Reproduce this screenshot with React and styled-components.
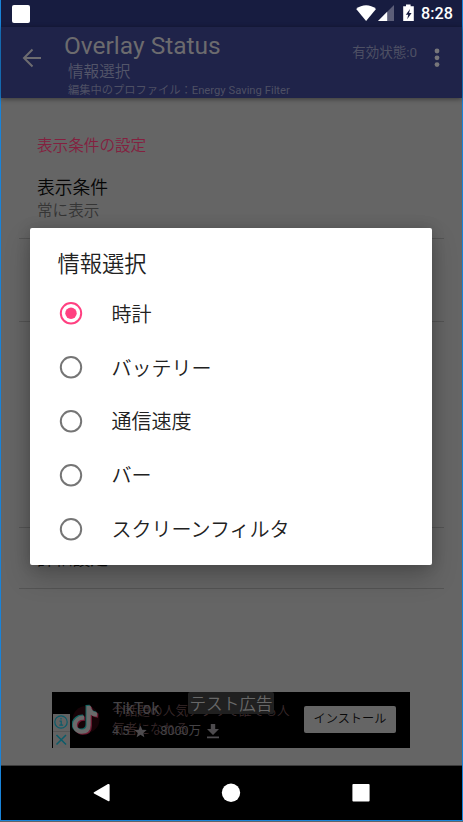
import React, { useState } from 'react'
import styled, { createGlobalStyle } from 'styled-components';

const options = ['時計', 'バッテリー', '通信速度', 'バー', 'スクリーンフィルタ'];

function App() {

  const [selected, setSelected] = useState('時計');

  return (
    <Screen>
      <GlobalStyle />
      <StatusBar>
        <AppSquare />
        <StatusIcons />
        <Clock>8:28</Clock>
      </StatusBar>

      <Toolbar>
        <BackButton aria-label="戻る">
          <svg width="20" height="20" viewBox="0 0 20 20" fill="none" stroke="#6d6c70" strokeWidth="2">
            <path d="M19 10H2.5M10.5 1.5L2 10l8.5 8.5" />
          </svg>
        </BackButton>
        <Titles>
          <AppTitle>Overlay Status</AppTitle>
          <SubTitle>情報選択</SubTitle>
          <Profile>編集中のプロファイル：Energy Saving Filter</Profile>
        </Titles>
        <ActiveState>有効状態:0</ActiveState>
        <MoreButton aria-label="メニュー">
          <svg width="6" height="20" viewBox="0 0 6 20" fill="#77767a">
            <circle cx="3" cy="3" r="2.4" />
            <circle cx="3" cy="9.8" r="2.4" />
            <circle cx="3" cy="16.6" r="2.4" />
          </svg>
        </MoreButton>
      </Toolbar>

      <Content>
        <Preference $height={141}>
          <Category>表示条件の設定</Category>
          <PrefTitle>表示条件</PrefTitle>
          <PrefSummary>常に表示</PrefSummary>
        </Preference>
        <Preference $height={83} />
        <Preference $height={206} />
        <Preference $height={61}>
          <PrefTitle>詳細設定</PrefTitle>
        </Preference>
        <AdBanner />
      </Content>

      <NavBar>
        <svg width="20" height="20" viewBox="0 0 20 20" fill="#fff">
          <path d="M3 9.2L17 1.1Q18.6.4 18.6 2V17.2Q18.6 18.8 17 18L3 10.4Q2.1 9.8 3 9.2Z" />
        </svg>
        <svg width="20" height="20" viewBox="0 0 20 20" fill="#fff">
          <circle cx="10" cy="9.7" r="9.2" />
        </svg>
        <svg width="20" height="20" viewBox="0 0 20 20" fill="#fff">
          <rect x="1.4" y="1.1" width="17.2" height="17.5" rx="1" />
        </svg>
      </NavBar>

      <Dialog role="dialog">
        <DialogTitle>情報選択</DialogTitle>
        {options.map((option) => (
          <Option key={option} onClick={() => setSelected(option)}>
            <Radio checked={selected === option} />
            <OptionText>{option}</OptionText>
          </Option>
        ))}
      </Dialog>
    </Screen>
  )
}

function Radio({ checked }) {
  const color = checked ? '#ff4081' : '#757575';
  return (
    <svg width="24" height="24" viewBox="0 0 24 24">
      <circle cx="12" cy="12.3" r="10.2" fill="none" stroke={color} strokeWidth="2" />
      {checked && <circle cx="12" cy="12.3" r="5.7" fill={color} />}
    </svg>
  )
}

function StatusIcons() {
  return (
    <svg width="60" height="20" viewBox="0 0 60 20">
      <path d="M.2 4.9C6 .1 14.2.1 20 4.9L10.1 17Z" fill="#fff" />
      <path d="M38 1v16H22z" fill="#5c5e78" />
      <path d="M31.2 7.8V17H22z" fill="#fff" />
      <path d="M50 .6h4.6v1.6h3.2V17H47.2V2.2H50z" fill="#fff" />
      <path d="M54 5l-4.2 5.7h2.4l-1 4.5 4.4-6.1h-2.5z" fill="#171c40" />
    </svg>
  )
}

function AdBanner() {
  const note = 'M12 14.7C1 14.2-.6 28 9.5 28.6C14.5 28.6 16.6 26 16.6 22V3C17 8 20 11.2 25 11.6';
  return (
    <Ad>
      <AdChoices>
        <svg width="16" height="16" viewBox="0 0 16 16" fill="none" stroke="#0b5c6a" strokeWidth="1.2">
          <circle cx="8" cy="8" r="6.2" />
          <path d="M6.5 7.2h1.7v4M6.3 11.2h3.8M8 4v1.5" />
        </svg>
        <svg width="16" height="16" viewBox="0 0 16 16" fill="none" stroke="#0b5c6a" strokeWidth="1.5">
          <path d="M3.5 3l9.5 9.5M13 3l-9.5 9.5" />
        </svg>
      </AdChoices>
      <svg width="28" height="34" viewBox="0 0 28 34">
        <circle cx="14" cy="16.5" r="13.5" fill="#160307" />
        <g fill="none" strokeWidth="4.2">
          <path d={note} stroke="#701a32" transform="translate(1.2 1)" />
          <path d={note} stroke="#126461" transform="translate(-1 -1)" />
          <path d={note} stroke="#6a6a6a" />
        </g>
      </svg>
      <AdTexts>
        <AdDescription>今話題の人気アプリで誰でも人<br />気者になれる</AdDescription>
        <AdDetails>
          <AdName>TikTok</AdName>
          <AdRating>
            4.5
            <svg width="13" height="13" viewBox="0 0 24 24" fill="#4d4b4e">
              <path d="M12 1l3.2 7.6 8.2.7-6.3 5.3 2 8L12 18.2 4.9 22.6l2-8L.6 9.3l8.2-.7z" />
            </svg>
            <span>8000万</span>
            <svg width="12" height="15" viewBox="0 0 12 15" fill="#4d4b4e">
              <path d="M3.8 0h4.4v5H12l-6 6-6-6h3.8zM0 12.5h12v1.8H0z" />
            </svg>
          </AdRating>
        </AdDetails>
      </AdTexts>
      <InstallButton>インストール</InstallButton>
      <TestBadge>テスト広告</TestBadge>
    </Ad>
  )
}

export default App


const GlobalStyle = createGlobalStyle`
body {
  margin: 0;
  background: #656565;
  overflow: hidden;
}
* {
  box-sizing: border-box;
}
svg {
  display: block;
  flex: none;
}
`

const Screen = styled.div`
position: relative;
display: flex;
flex-direction: column;
width: 463px;
height: 821px;
border: solid #1983d8;
border-width: 0 1px 1px 1px;
background: #656565;
font-family: Roboto, "Noto Sans CJK JP", sans-serif;
white-space: nowrap;
`

const StatusBar = styled.div`
display: flex;
align-items: center;
height: 27px;
flex: none;
padding: 0 8px 0 11px;
background: #171c40;
`

const AppSquare = styled.div`
width: 18px;
height: 18px;
margin-right: auto;
border-radius: 2px;
background: #fff;
`

const Clock = styled.span`
width: 33px;
margin-left: 5px;
font-size: 16.2px;
font-weight: 500;
line-height: 28px;
color: #fff;
`

const Toolbar = styled.header`
display: flex;
align-items: flex-start;
height: 71px;
flex: none;
background: #1f2349;
box-shadow: 0 1px 5px rgba(0, 0, 0, 0.45);
z-index: 1;
`

const IconButton = styled.button`
padding: 0;
border: none;
background: none;
`

const BackButton = styled(IconButton)`
width: 62px;
padding: 21px 0 0 21px;
`

const MoreButton = styled(IconButton)`
padding: 21px 22px 0 17px;
`

const Titles = styled.div`
flex: 1;
padding-top: 4px;
`

const AppTitle = styled.div`
padding-left: 1px;
font-size: 24.5px;
line-height: 29px;
color: #6c6b6e;
`

const SubTitle = styled.div`
padding-left: 5px;
font-size: 15.6px;
font-weight: 350;
line-height: 24px;
color: #54566a;
`

const Profile = styled.div`
padding-left: 5px;
font-size: 11.25px;
line-height: 13px;
color: #4e5064;
`

const ActiveState = styled.div`
padding-top: 15px;
font-size: 13.5px;
line-height: 20px;
color: #4e5064;
`

const Content = styled.main`
display: flex;
flex-direction: column;
height: 668px;
flex: none;
padding: 0 18px;
border-bottom: 1px solid #3b3b3b;
`

const Preference = styled.section`
height: ${(props) => props.$height}px;
padding-left: 18px;
border-bottom: 1px solid #545454;
`

const Category = styled.div`
padding-top: 37px;
font-size: 15.6px;
font-weight: 350;
line-height: 22px;
color: #84203f;
`

const PrefTitle = styled.div`
padding-top: 18px;
font-size: 17.8px;
font-weight: 350;
line-height: 26px;
color: #050505;
`

const PrefSummary = styled.div`
font-size: 15.6px;
font-weight: 350;
line-height: 20px;
color: #353535;
`

const Ad = styled.aside`
position: relative;
display: flex;
width: 358px;
height: 56px;
margin: 103px 0 0 33px;
padding-right: 14px;
background: #000;

> svg {
  margin: 11px 0 0 2px;
}
`

const AdChoices = styled.div`
display: flex;
flex-direction: column;
justify-content: space-between;
width: 17px;
height: 34px;
margin: 22px 0 0 1px;
background: linear-gradient(#626262 50%, #555 50%, #555 53%, #626262 53%);
`

const AdTexts = styled.div`
display: grid;
flex: 1;
padding-left: 12px;

> * {
  grid-area: 1 / 1;
}
`

const AdDescription = styled.div`
padding-top: 10px;
font-size: 12.7px;
font-weight: 350;
line-height: 18px;
color: #39292b;
`

const AdDetails = styled.div`
padding-top: 8px;
color: #454346;
`

const AdName = styled.div`
padding-left: 1px;
font-size: 15.6px;
line-height: 18px;
`

const AdRating = styled.div`
display: flex;
align-items: center;
gap: 5px;
font-size: 12.5px;
line-height: 26px;

span {
  padding: 0 1px 0 8px;
}
`

const InstallButton = styled.button`
width: 92px;
height: 27px;
margin-top: 14px;
padding: 0;
border: none;
border-radius: 2px;
background: #656565;
color: #080808;
font-family: inherit;
font-size: 12.2px;
font-weight: 350;
line-height: 23px;
`

const TestBadge = styled.div`
position: absolute;
top: 0;
left: 136px;
width: 86px;
height: 22px;
border-radius: 2px;
background: #202020;
color: #686868;
font-size: 16.6px;
font-weight: 350;
line-height: 25px;
text-align: center;
`

const NavBar = styled.nav`
display: flex;
justify-content: space-between;
align-items: center;
height: 54px;
flex: none;
padding: 0 92px 0 90px;
background: #000;

svg:last-child {
  margin-right: -1px;
}
`

const Dialog = styled.div`
position: absolute;
top: 227.5px;
left: 29.4px;
z-index: 2;
width: 401.6px;
height: 337px;
padding-top: 19px;
border-radius: 2px;
background: #fff;
box-shadow: 0 12px 26px rgba(0, 0, 0, 0.22), 0 0 14px rgba(0, 0, 0, 0.16);
color: #212121;
`

const DialogTitle = styled.h2`
margin: 0;
padding: 1px 0 6px 27px;
font-size: 22.3px;
font-weight: 350;
line-height: 33px;
`

const Option = styled.div`
display: flex;
align-items: center;
height: 53.8px;
padding-left: 28.4px;
`

const OptionText = styled.span`
padding: 3px 0 0 28.6px;
font-size: 20.05px;
font-weight: 350;
line-height: 30px;
`
